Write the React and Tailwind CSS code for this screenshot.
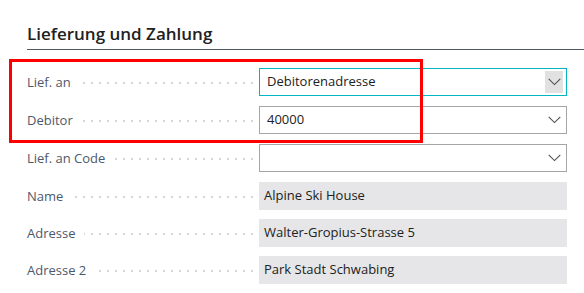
import React from "react";

const font = { fontFamily: '"Open Sans", "Noto Sans", sans-serif' };

function Chevron({ boxed }) {
  return (
    <div
      className={
        "flex items-center justify-center w-[18px] h-[22px] " +
        (boxed ? "bg-[#e1e1e1]" : "")
      }
    >
      <svg width="13" height="8" viewBox="0 0 13 8" fill="none">
        <path d="M0.7 0.9 L6.5 6.6 L12.3 0.9" stroke="#505050" strokeWidth="1.1" />
      </svg>
    </div>
  );
}

function Label({ text }) {
  return (
    <div className="relative flex-1 h-[28px] flex items-center mr-[4px]">
      <div className="absolute left-0 right-0 top-[14px] h-[2px] bg-[linear-gradient(to_right,#d6d6d6_0px,#d6d6d6_2px,transparent_2px,transparent_8px)] bg-size-[8px_2px] bg-repeat-x" />
      <span className="relative bg-white pr-[9px] text-[13px] text-[#4d596b] leading-none">
        {text}
      </span>
    </div>
  );
}

function Row({ label, value, kind, className = "" }) {
  return (
    <div className={"flex items-center " + className}>
      <Label text={label} />
      {kind === "gray" ? (
        <div className="w-[308px] h-[28px] bg-[#e6e6e8] flex items-center pl-[5px] text-[13px] text-[#212121]">
          {value}
        </div>
      ) : (
        <div
          className={
            "w-[308px] h-[28px] flex items-center justify-between pl-[7px] pr-[3px] text-[13px] text-[#212121] border " +
            (kind === "focus" ? "border-[#00b7c3]" : "border-[#a6a6a6]")
          }
        >
          <span>{value}</span>
          <Chevron boxed={kind === "focus"} />
        </div>
      )}
    </div>
  );
}

export default function App() {
  return (
    <div className="relative w-[584px] h-[293px] bg-white overflow-hidden" style={font}>
      <div className="pl-[27px] pr-[17px] pt-[22px]">
        <div className="text-[17px] font-semibold text-[#212121] leading-[24px] pb-[3px] border-b border-[#505a66] mr-[-17px]">
          Lieferung und Zahlung
        </div>
        <div className="flex flex-col mt-[18px]">
          <Row label="Lief. an" value="Debitorenadresse" kind="focus" />
          <Row label="Debitor" value="40000" kind="border" className="mt-[10px]" />
          <Row label="Lief. an Code" value="" kind="border" className="mt-[10px]" />
          <Row label="Name" value="Alpine Ski House" kind="gray" className="mt-[10px]" />
          <Row label="Adresse" value="Walter-Gropius-Strasse 5" kind="gray" className="mt-[9px]" />
          <Row label="Adresse 2" value="Park Stadt Schwabing" kind="gray" className="mt-[9px]" />
        </div>
      </div>
      <div className="absolute left-[9px] top-[59px] w-[414px] h-[84px] border-[3px] border-[#ff0000]" />
    </div>
  );
}
